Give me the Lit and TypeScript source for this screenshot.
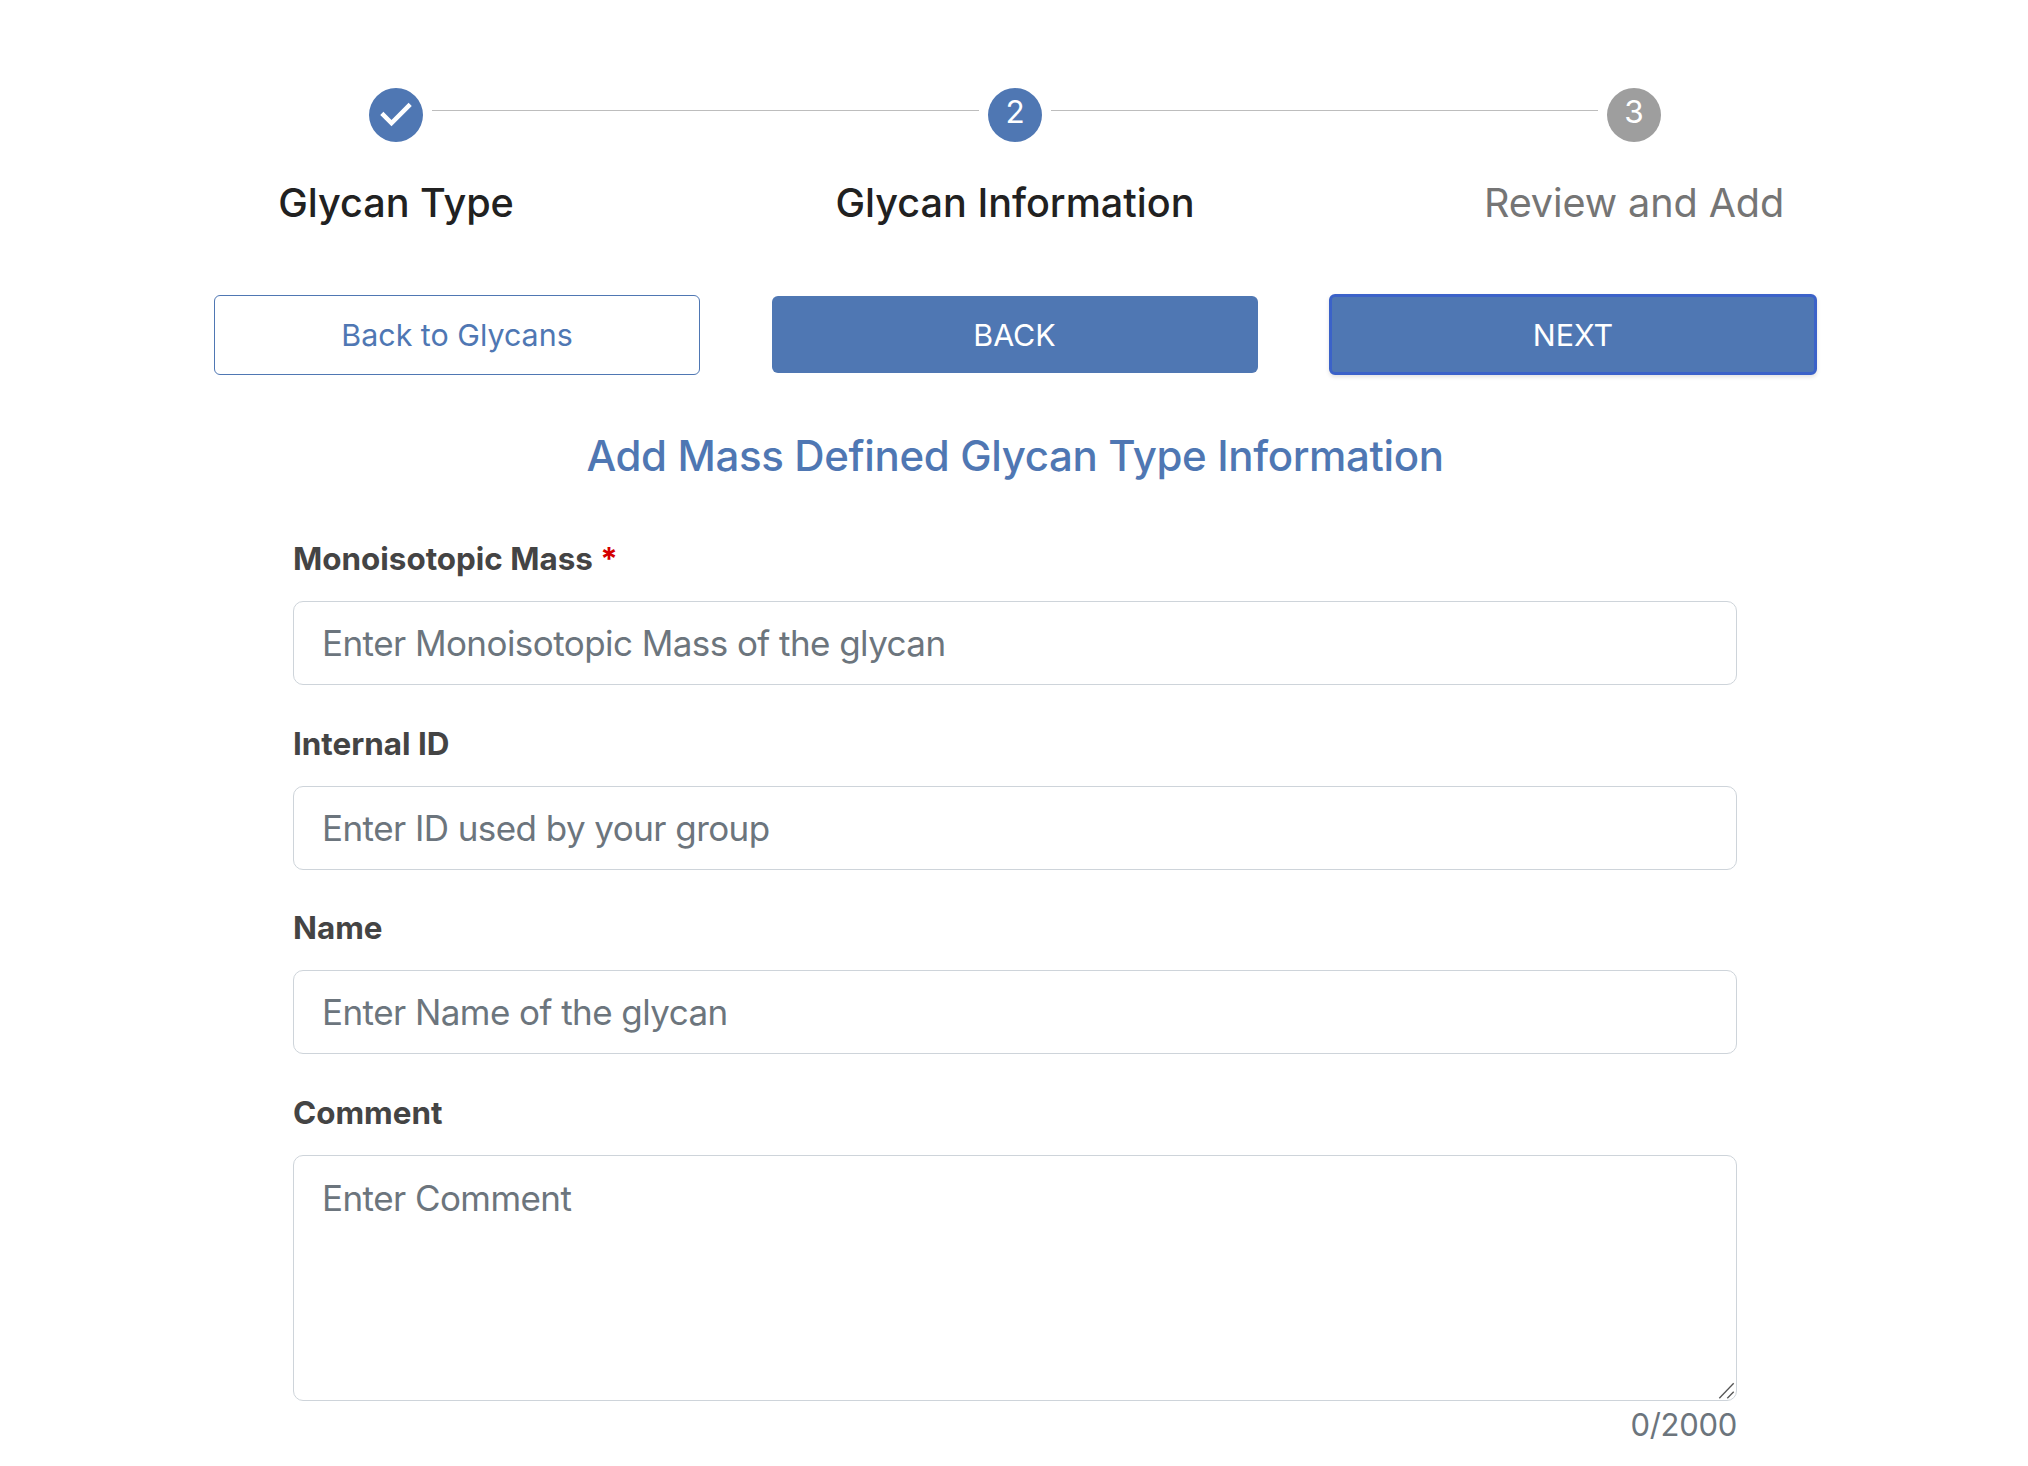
import { LitElement, css, html } from 'lit';
import { customElement } from 'lit/decorators.js';

const steps = ['Glycan Type', 'Glycan Information', 'Review and Add'];

const fields = [
  { label: 'Monoisotopic Mass', placeholder: 'Enter Monoisotopic Mass of the glycan', required: true },
  { label: 'Internal ID', placeholder: 'Enter ID used by your group', required: false },
  { label: 'Name', placeholder: 'Enter Name of the glycan', required: false },
];

@customElement('app-root')
export class AppRoot extends LitElement {
  static styles = css`
    :host {
      display: block;
      height: 1466px;
      overflow: hidden;
      background: #fff;
      font-family: Inter, 'Liberation Sans', sans-serif;
    }

    * {
      box-sizing: border-box;
    }

    .page {
      display: flex;
      flex-direction: column;
      align-items: center;
      padding-top: 88px;
      padding-left: 2px;
    }

    .stepper {
      display: grid;
      grid-template-columns: repeat(3, 619px);
    }

    .step {
      display: flex;
      flex-direction: column;
      align-items: stretch;
    }

    .step-head {
      display: grid;
      grid-template-columns: 1fr 54px 1fr;
      column-gap: 9px;
    }

    .line {
      margin-top: 22px;
      border-top: 1px solid #bdbdbd;
    }

    .line.hidden {
      border-top: 0;
    }

    .icon {
      display: block;
      width: 54px;
      height: 54px;
      fill: #4f77b3;
    }

    .icon.todo {
      fill: #9e9e9e;
    }

    .icon text {
      fill: #fff;
      font-size: 14px;
      font-family: Inter, sans-serif;
    }

    .step-label {
      margin-top: 37px;
      height: 48px;
      line-height: 48px;
      text-align: center;
      font-size: 39.6px;
      font-weight: 500;
      color: #212121;
    }

    .step-label.todo {
      font-weight: 400;
      letter-spacing: -0.1px;
      color: #757575;
    }

    .actions {
      display: grid;
      grid-template-columns: 486px 486px 488px;
      column-gap: 71.5px;
      align-items: center;
      margin-top: 67px;
      margin-left: 1px;
      width: 1603px;
    }

    button {
      font: inherit;
      font-size: 30.4px;
      border-radius: 6px;
      cursor: pointer;
    }

    .outline {
      height: 80px;
      background: #fff;
      border: 1px solid #4f77b3;
      color: #4f77b3;
    }

    .solid {
      height: 77px;
      background: #4f77b3;
      border: 0;
      color: #fff;
    }

    .solid.focused {
      height: 81px;
      border: 3px solid #3b62c9;
      box-shadow: 0 2px 4px rgba(0, 0, 0, 0.12);
    }

    h2 {
      margin: 53px 0 0;
      height: 56px;
      line-height: 56px;
      font-size: 42px;
      letter-spacing: -0.36px;
      font-weight: 500;
      color: #4f77b3;
      text-align: center;
    }

    form {
      width: 1444px;
      margin-top: 55px;
      display: flex;
      flex-direction: column;
    }

    label {
      display: block;
      height: 40px;
      line-height: 40px;
      font-size: 31.4px;
      font-weight: 700;
      color: #444;
    }

    .star {
      color: #d40000;
    }

    input,
    textarea {
      display: block;
      width: 100%;
      margin-top: 22px;
      padding: 0 28px;
      border: 1px solid #ced4da;
      border-radius: 10px;
      background: #fff;
      font: inherit;
      font-size: 35px;
      letter-spacing: -0.56px;
      color: #495057;
      outline: none;
    }

    input {
      height: 84px;
      margin-bottom: 38.67px;
    }

    .area {
      position: relative;
    }

    textarea {
      height: 246px;
      padding-top: 21px;
      padding-bottom: 21px;
      line-height: 43px;
      resize: none;
    }

    input::placeholder,
    textarea::placeholder {
      color: #6c757d;
      opacity: 1;
    }

    .grip {
      position: absolute;
      right: 0;
      bottom: 0;
      width: 20px;
      height: 20px;
      pointer-events: none;
    }

    .count {
      margin-top: 4px;
      text-align: right;
      font-size: 31px;
      letter-spacing: -0.3px;
      line-height: 40px;
      color: #6c757d;
    }
  `;

  private renderIcon(index: number) {
    if (index === 0) {
      return html`<svg class="icon" viewBox="0 0 24 24">
        <path d="M12 0a12 12 0 1 0 0 24 12 12 0 0 0 0-24zm-2 17l-5-5 1.4-1.4 3.6 3.6 7.6-7.6L19 8l-9 9z"></path>
      </svg>`;
    }
    return html`<svg class="icon ${index === 2 ? 'todo' : ''}" viewBox="0 0 24 24">
      <circle cx="12" cy="12" r="12"></circle>
      <text x="12" y="15.6" text-anchor="middle">${index + 1}</text>
    </svg>`;
  }

  render() {
    return html`
      <div class="page">
        <div class="stepper">
          ${steps.map(
            (step, i) => html`
              <div class="step">
                <div class="step-head">
                  <div class="line ${i === 0 ? 'hidden' : ''}"></div>
                  ${this.renderIcon(i)}
                  <div class="line ${i === 2 ? 'hidden' : ''}"></div>
                </div>
                <div class="step-label ${i === 2 ? 'todo' : ''}">${step}</div>
              </div>
            `,
          )}
        </div>

        <div class="actions">
          <button class="outline">Back to Glycans</button>
          <button class="solid">BACK</button>
          <button class="solid focused">NEXT</button>
        </div>

        <h2>Add Mass Defined Glycan Type Information</h2>

        <form>
          ${fields.map(
            (f) => html`
              <label>${f.label}${f.required ? html` <span class="star">*</span>` : ''}</label>
              <input type="text" placeholder=${f.placeholder} />
            `,
          )}
          <label>Comment</label>
          <div class="area">
            <textarea placeholder="Enter Comment"></textarea>
            <svg class="grip" viewBox="0 0 20 20" fill="none" stroke="#555" stroke-width="1.3">
              <path d="M2.3 17.3L16.7 2.3"></path>
              <path d="M10.3 17.3L16.7 10.7"></path>
            </svg>
          </div>
          <div class="count">0/2000</div>
        </form>
      </div>
    `;
  }
}
